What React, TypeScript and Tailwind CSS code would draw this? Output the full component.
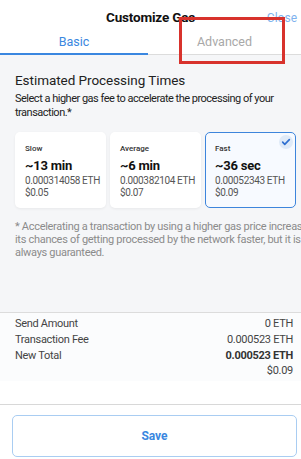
import React from "react";

interface SpeedOption {
  label: string;
  time: string;
  eth: string;
  usd: string;
  selected?: boolean;
}

const options: SpeedOption[] = [
  { label: "Slow", time: "~13 min", eth: "0.000314058 ETH", usd: "$0.05" },
  { label: "Average", time: "~6 min", eth: "0.000382104 ETH", usd: "$0.07" },
  { label: "Fast", time: "~36 sec", eth: "0.00052343 ETH", usd: "$0.09", selected: true },
];

function SpeedCard({ option }: { option: SpeedOption }) {
  return (
    <div
      className={`relative flex-1 min-w-0 h-[76px] rounded-[5px] px-[9px] pt-[11px] ${
        option.selected
          ? "bg-[#f7faff] border border-[#3d85dc]"
          : "bg-white border border-transparent shadow-[0_1px_3px_rgba(0,0,0,0.06)]"
      }`}
    >
      {option.selected && (
        <div className="absolute top-[2px] right-[2px] w-[14px] h-[14px] rounded-full bg-[#dfeaf8] flex items-center justify-center">
          <svg width="10" height="10" viewBox="0 0 24 24" fill="none">
            <path d="M4 12.5l5 5L20 6.5" stroke="#2f6fd0" strokeWidth="4" strokeLinecap="round" strokeLinejoin="round" />
          </svg>
        </div>
      )}
      <p className="text-[8px] font-medium text-[#333] leading-[10px]">{option.label}</p>
      <p className="mt-[4px] text-[13px] font-bold text-[#111] leading-[16px] tracking-[-0.2px]">{option.time}</p>
      <p className="mt-[1px] text-[10px] text-[#555] leading-[12px] tracking-[-0.35px] whitespace-nowrap">{option.eth}</p>
      <p className="text-[10px] text-[#555] leading-[12px] tracking-[-0.35px]">{option.usd}</p>
    </div>
  );
}

function SummaryRow({ label, value, bold }: { label: string; value: string; bold?: boolean }) {
  return (
    <div className="flex justify-between items-start">
      <span className="text-[11px] text-[#444] leading-[16px] tracking-[-0.3px]">{label}</span>
      <span className={`text-[11px] leading-[16px] tracking-[-0.3px] ${bold ? "font-bold text-[#333]" : "text-[#444]"}`}>
        {value}
      </span>
    </div>
  );
}

export default function App() {
  return (
    <div className="relative w-[301px] h-[459px] overflow-hidden bg-white font-['Roboto',sans-serif]">
      {/* header */}
      <div className="relative h-[34px] flex items-center justify-center">
        <h1 className="text-[13.5px] font-bold text-[#111] tracking-[-0.2px]">Customize Gas</h1>
        <span className="absolute right-[4px] top-[9px] text-[12px] text-[#7fb3ee]">Close</span>
      </div>
      {/* tabs */}
      <div className="flex h-[21px] border-b border-[#dcdcdc]">
        <div className="w-[148px] border-b-2 border-[#3a87e0] -mb-px text-center text-[12.5px] text-[#3a87e0] leading-[16px]">
          Basic
        </div>
        <div className="flex-1 text-center text-[12.5px] text-[#a8a8a8] leading-[16px]">Advanced</div>
      </div>

      {/* body */}
      <div className="bg-[#f5f6f8] h-[258px] px-[15px] pt-[16px] border-b border-[#dcdcdc]">
        <h2 className="text-[13.5px] text-[#222] leading-[18px] tracking-[-0.05px]">Estimated Processing Times</h2>
        <p className="mt-[3px] w-[275px] text-[11px] text-[#222] leading-[14px] tracking-[-0.5px]">
          Select a higher gas fee to accelerate the processing of your transaction.*
        </p>
        <div className="mt-[12px] flex gap-[4px] w-[281px]">
          {options.map((o) => (
            <SpeedCard key={o.label} option={o} />
          ))}
        </div>
        <p className="mt-[12px] whitespace-nowrap text-[11px] text-[#8b8b8b] leading-[13px] tracking-[-0.3px]">
          * Accelerating a transaction by using a higher gas price increases
          <br />
          its chances of getting processed by the network faster, but it is not
          <br />
          always guaranteed.
        </p>
      </div>

      {/* summary */}
      <div className="bg-[#fbfcfd] px-[15px] pr-[8px] pt-[3px] pb-[4px]">
        <SummaryRow label="Send Amount" value="0 ETH" />
        <SummaryRow label="Transaction Fee" value="0.000523 ETH" />
        <SummaryRow label="New Total" value="0.000523 ETH" bold />
        <div className="text-right text-[11px] text-[#444] leading-[13px] tracking-[-0.3px]">$0.09</div>
      </div>

      {/* footer */}
      <div className="absolute left-0 right-0 bottom-0 h-[55px] border-t border-[#d8d8d8] px-[12px] pt-[10px]">
        <button className="w-[285px] h-[42px] rounded-[5px] border border-[#a9cdf2] bg-white text-[12px] font-bold text-[#3a87e0]">
          Save
        </button>
      </div>

      {/* annotation */}
      <div className="absolute left-[179px] top-[17px] w-[106px] h-[47px] border-[3px] border-[#d8322c]" />
    </div>
  );
}
